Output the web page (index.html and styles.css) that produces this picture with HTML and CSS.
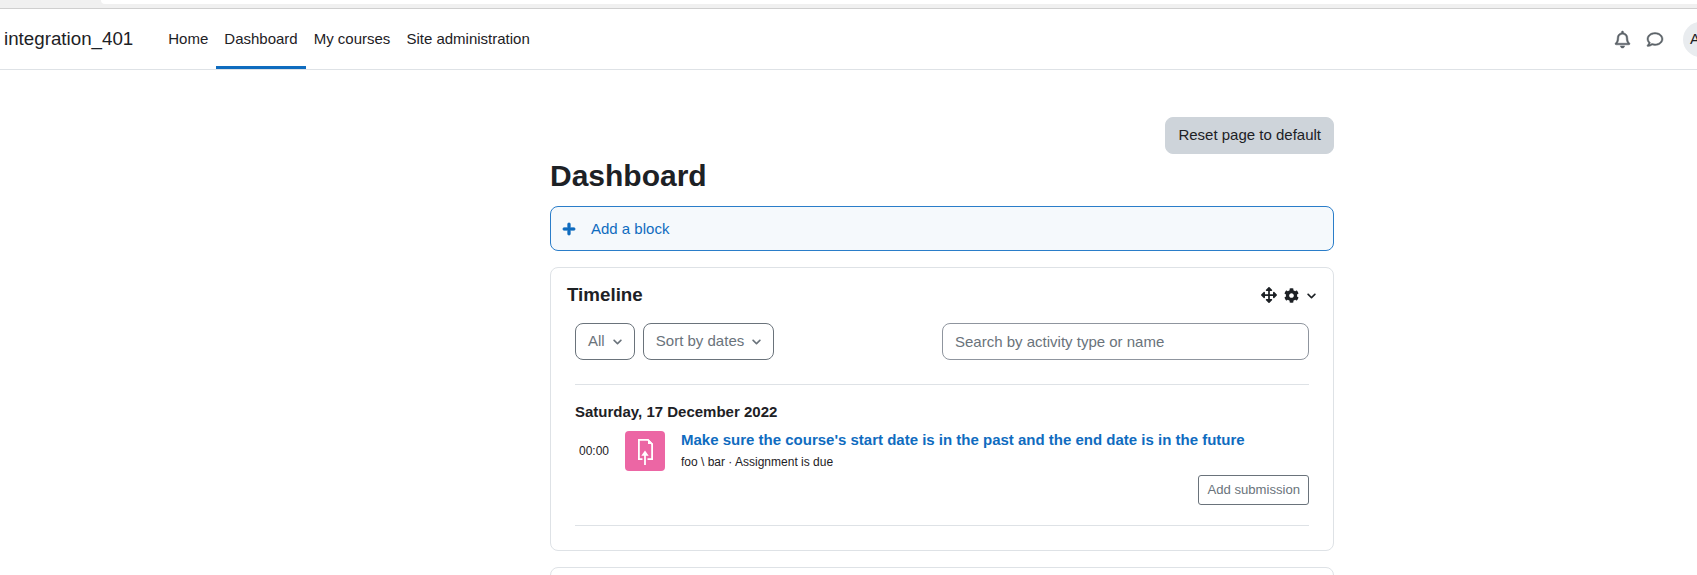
FILE: index.html
```html
<!DOCTYPE html>
<html lang="en">
<head>
<meta charset="utf-8">
<title>Dashboard</title>
<link rel="stylesheet" href="styles.css">
</head>
<body>
<div class="chrome"><div class="chrome-tab"></div></div>
<header class="navbar">
  <a class="brand">integration_401</a>
  <nav class="nav">
    <a class="nav-link">Home</a>
    <a class="nav-link active">Dashboard</a>
    <a class="nav-link">My courses</a>
    <a class="nav-link">Site administration</a>
  </nav>
  <div class="nav-tools">
    <svg class="tool-icon bell" viewBox="0 0 448 512"><path d="M439.39 362.29c-19.32-20.76-55.47-51.99-55.47-154.29 0-77.7-54.48-139.9-127.94-155.16V32c0-17.67-14.32-32-31.98-32s-31.98 14.33-31.98 32v20.84C118.56 68.1 64.08 130.3 64.08 208c0 102.3-36.15 133.53-55.47 154.29-6 6.45-8.66 14.16-8.61 21.71.11 16.4 12.98 32 32.1 32h383.8c19.12 0 32-15.6 32.1-32 .05-7.55-2.61-15.27-8.61-21.71zM67.53 368c21.22-27.97 44.42-74.33 44.53-159.42 0-.2-.06-.38-.06-.58 0-61.86 50.14-112 112-112s112 50.14 112 112c0 .2-.06.38-.06.58.11 85.1 23.31 131.46 44.53 159.42H67.53zM224 512c35.32 0 63.97-28.65 63.97-64H160.03c0 35.35 28.65 64 63.97 64z"/></svg>
    <svg class="tool-icon comment" viewBox="0 0 512 512"><path d="M256 32C114.6 32 0 125.1 0 240c0 47.6 19.9 91.2 52.9 126.3C38 405.7 7 439.1 6.5 439.5c-6.6 7-8.4 17.2-4.6 26S14.4 480 24 480c61.5 0 110-25.7 139.1-46.3C192 442.8 223.2 448 256 448c141.4 0 256-93.1 256-208S397.4 32 256 32zm0 368c-26.7 0-53.1-4.1-78.4-12.1l-22.7-7.2-19.5 13.8c-14.3 10.1-33.9 21.4-57.5 29 7.3-12.1 14.4-25.7 19.9-40.2l10.6-28.1-20.6-21.8C69.7 314.1 48 282.2 48 240c0-88.2 93.3-160 208-160s208 71.8 208 160-93.3 160-208 160z"/></svg>
    <span class="avatar">AU</span>
  </div>
</header>
<main class="main">
  <div class="reset-row"><button class="btn-reset">Reset page to default</button></div>
  <h1 class="page-title">Dashboard</h1>
  <a class="add-block">
    <svg class="plus" viewBox="0 0 448 448"><path d="M416 176H272V32c0-17.67-14.33-32-32-32h-32c-17.67 0-32 14.33-32 32v144H32c-17.67 0-32 14.33-32 32v32c0 17.67 14.33 32 32 32h144v144c0 17.67 14.33 32 32 32h32c17.67 0 32-14.33 32-32V272h144c17.67 0 32-14.33 32-32v-32c0-17.67-14.33-32-32-32z"/></svg>
    <span>Add a block</span>
  </a>
  <section class="card">
    <div class="card-head">
      <h2 class="card-title">Timeline</h2>
      <div class="card-actions">
        <svg class="move" viewBox="0 0 512 512"><path d="M352.201 425.775l-79.196 79.196c-9.373 9.373-24.568 9.373-33.941 0l-79.196-79.196c-15.119-15.119-4.411-40.971 16.971-40.97h51.162L228 284H127.196v51.162c0 21.382-25.851 32.09-40.971 16.971L7.029 272.937c-9.373-9.373-9.373-24.569 0-33.941L86.225 159.8c15.119-15.119 40.971-4.411 40.971 16.971V228H228V127.196h-51.23c-21.382 0-32.09-25.851-16.971-40.971l79.196-79.196c9.373-9.373 24.568-9.373 33.941 0l79.196 79.196c15.119 15.119 4.411 40.971-16.971 40.971h-51.162V228h100.804v-51.162c0-21.382 25.851-32.09 40.97-16.971l79.196 79.196c9.373 9.373 9.373 24.569 0 33.941L425.773 352.2c-15.119 15.119-40.971 4.411-40.97-16.971V284H284v100.804h51.23c21.382 0 32.09 25.851 16.971 40.971z"/></svg>
        <svg class="cog" viewBox="0 0 512 512"><path d="M487.4 315.7l-42.6-24.6c4.3-23.2 4.3-47 0-70.2l42.6-24.6c4.9-2.8 7.1-8.6 5.5-14-11.1-35.6-30-67.8-54.7-94.6-3.8-4.1-10-5.1-14.8-2.3L380.8 110c-17.9-15.4-38.5-27.3-60.8-35.1V25.8c0-5.6-3.9-10.5-9.4-11.7-36.7-8.2-74.3-7.8-109.2 0-5.5 1.2-9.4 6.1-9.4 11.7V75c-22.2 7.9-42.8 19.8-60.8 35.1L88.7 85.5c-4.9-2.8-11-1.9-14.8 2.3-24.7 26.7-43.6 58.9-54.7 94.6-1.7 5.4.6 11.2 5.5 14L67.3 221c-4.3 23.2-4.3 47 0 70.2l-42.6 24.6c-4.9 2.8-7.1 8.6-5.5 14 11.1 35.6 30 67.8 54.7 94.6 3.8 4.1 10 5.1 14.8 2.3l42.6-24.6c17.9 15.4 38.5 27.3 60.8 35.1v49.2c0 5.6 3.9 10.5 9.4 11.7 36.7 8.2 74.3 7.8 109.2 0 5.5-1.2 9.4-6.1 9.4-11.7v-49.2c22.2-7.9 42.8-19.8 60.8-35.1l42.6 24.6c4.9 2.8 11 1.9 14.8-2.3 24.7-26.7 43.6-58.9 54.7-94.6 1.5-5.5-.7-11.3-5.6-14.1zM256 336c-44.1 0-80-35.9-80-80s35.9-80 80-80 80 35.9 80 80-35.9 80-80 80z"/></svg>
        <svg class="chev chev-dark" viewBox="0 0 448 512"><path d="M207.029 381.476L12.686 187.132c-9.373-9.373-9.373-24.569 0-33.941l22.667-22.667c9.357-9.357 24.522-9.375 33.901-.04L224 284.505l154.745-154.021c9.379-9.335 24.544-9.317 33.901.04l22.667 22.667c9.373 9.373 9.373 24.569 0 33.941L240.971 381.476c-9.373 9.372-24.569 9.372-33.942 0z"/></svg>
      </div>
    </div>
    <div class="card-body">
      <div class="filters">
        <div class="filter-group">
          <button class="btn-filter">All <svg class="chev" viewBox="0 0 448 512"><path d="M207.029 381.476L12.686 187.132c-9.373-9.373-9.373-24.569 0-33.941l22.667-22.667c9.357-9.357 24.522-9.375 33.901-.04L224 284.505l154.745-154.021c9.379-9.335 24.544-9.317 33.901.04l22.667 22.667c9.373 9.373 9.373 24.569 0 33.941L240.971 381.476c-9.373 9.372-24.569 9.372-33.942 0z"/></svg></button>
          <button class="btn-filter">Sort by dates <svg class="chev" viewBox="0 0 448 512"><path d="M207.029 381.476L12.686 187.132c-9.373-9.373-9.373-24.569 0-33.941l22.667-22.667c9.357-9.357 24.522-9.375 33.901-.04L224 284.505l154.745-154.021c9.379-9.335 24.544-9.317 33.901.04l22.667 22.667c9.373 9.373 9.373 24.569 0 33.941L240.971 381.476c-9.373 9.372-24.569 9.372-33.942 0z"/></svg></button>
        </div>
        <input class="search" type="text" placeholder="Search by activity type or name">
      </div>
      <div class="events">
        <h3 class="event-date">Saturday, 17 December 2022</h3>
        <div class="event">
          <span class="event-time">00:00</span>
          <span class="event-tile">
            <svg class="file-icon" viewBox="0 0 20 30" fill="none" stroke="#fff" stroke-width="1.800">
              <path d="M7.500 23.100H3.900V3.900H13L17.100 8V23.100H12.500"/>
              <path d="M13 3 18 8H13z" fill="#fff" stroke="none"/>
              <path d="M10 19V29"/>
              <path d="M6.300 19.800 10 14.500l3.700 5.300z" fill="#fff" stroke="none"/>
            </svg>
          </span>
          <div class="event-info">
            <a class="event-title">Make sure the course's start date is in the past and the end date is in the future</a>
            <div class="event-meta">foo \ bar · Assignment is due</div>
          </div>
        </div>
        <div class="event-action"><button class="btn-submit">Add submission</button></div>
      </div>
    </div>
  </section>
  <section class="card card-next"></section>
</main>
</body>
</html>
```
FILE: styles.css
```css
* { box-sizing: border-box; }
html, body { margin: 0; padding: 0; height: 575px; overflow: hidden; background: #fff; }
body { font-family: "Liberation Sans", Arial, sans-serif; font-size: 15px; line-height: 22.5px; color: #1d2125; }
button, input { font-family: inherit; }

.chrome { height: 9px; background: #f0f0f0; border-bottom: 1px solid #cfcfcf; padding-left: 101px; }
.chrome-tab { height: 4px; background: #fff; border-bottom-left-radius: 8px; }

.navbar { height: 61px; display: flex; align-items: stretch; background: #fff; border-bottom: 1px solid #dee2e6; overflow: hidden; }
.brand { font-size: 18.75px; align-self: center; margin-left: 4px; margin-right: 27px; white-space: nowrap; }
.nav { display: flex; align-items: stretch; }
.nav-link { display: flex; align-items: center; padding: 3px 8px 0; border-bottom: 3px solid transparent; white-space: nowrap; }
.nav-link.active { border-bottom-color: #0f6cbf; }
.nav-tools { margin-left: auto; display: flex; align-items: center; margin-right: -21px; }
.tool-icon { fill: #5b6268; stroke: #5b6268; stroke-width: 14; height: 17px; display: block; overflow: visible; }
.bell { width: 15px; margin-right: 17px; }
.comment { width: 16px; margin-right: 20px; }
.avatar { width: 35px; height: 35px; border-radius: 50%; background: #e9ecef; display: flex; align-items: center; justify-content: center; flex: none; }

.main { width: 784px; margin-left: 550px; padding-top: 47px; }
.reset-row { display: flex; justify-content: flex-end; }
.btn-reset { height: 37px; padding: 0 12px 2px; font-size: 15px; color: #1d2125; background: #ced4da; border: 1px solid #ced4da; border-radius: 8px; }
.page-title { margin: 4px 0 12px; font-size: 30px; line-height: 36px; font-weight: 700; }

.add-block { height: 45px; display: flex; align-items: center; padding: 1px 0 0 12px; color: #0f6cbf; background: #f5f9fc; border: 1px solid #2a7dc9; border-radius: 8px; }
.plus { width: 12px; height: 12px; fill: #0f6cbf; stroke: #0f6cbf; stroke-width: 24; margin-right: 16px; display: block; overflow: visible; }

.card { margin-top: 16px; height: 284px; border: 1px solid #dee2e6; border-radius: 8px; padding: 16px 16px 0; }
.card-head { display: flex; justify-content: space-between; align-items: center; height: 23px; }
.card-title { margin: 0; font-size: 18.75px; line-height: 22.5px; font-weight: 700; }
.card-actions { display: flex; align-items: center; margin-right: 1px; }
.move { width: 16px; height: 16px; fill: #1d2125; margin: 0 7px 2px -1px; display: block; }
.cog { width: 15px; height: 15px; fill: #1d2125; margin-right: 8px; display: block; }
.chev { width: 9px; height: 10px; fill: #6a737b; display: inline-block; vertical-align: -1px; margin-left: 4px; }
.chev-dark { fill: #1d2125; margin-left: 0; }

.card-body { padding: 16px 8px 0; }
.filters { display: flex; justify-content: space-between; align-items: center; height: 37px; }
.filter-group { display: flex; gap: 8px; }
.btn-filter { height: 37px; padding: 0 12px 2px; font-size: 15px; color: #6a737b; background: #fff; border: 1px solid #6a737b; border-radius: 8px; white-space: nowrap; }
.search { width: 367px; height: 37px; padding: 0 12px; font-size: 15px; color: #6a737b; background: #fff; border: 1px solid #8f959e; border-radius: 8px; }
.search::placeholder { color: #6a737b; opacity: 1; }

.events { margin-top: 24px; height: 142px; border-top: 1px solid #dee2e6; border-bottom: 1px solid #dee2e6; padding-top: 16px; }
.event-date { margin: 0 0 7px; font-size: 15px; line-height: 22.5px; font-weight: 700; }
.event { display: flex; align-items: flex-start; }
.event-time { width: 50px; padding-left: 4px; font-size: 12px; line-height: 40px; flex: none; }
.event-tile { width: 40px; height: 40px; background: #ec66a4; border-radius: 4px; display: flex; align-items: center; justify-content: center; flex: none; margin-right: 16px; }
.file-icon { width: 20px; height: 30px; display: block; }
.event-info { min-width: 0; }
.event-title { display: block; font-weight: 700; color: #0f6cbf; white-space: nowrap; line-height: 17px; }
.event-meta { font-size: 12px; line-height: 18px; margin-top: 5px; }
.event-action { display: flex; justify-content: flex-end; margin-top: 4px; }
.btn-submit { height: 30px; padding: 0 8px; font-size: 13.125px; color: #6a737b; background: #fff; border: 1px solid #6a737b; border-radius: 3px; white-space: nowrap; }

.card-next { height: 100px; }
```
